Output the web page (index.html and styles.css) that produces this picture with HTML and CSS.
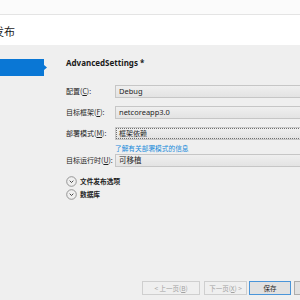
FILE: index.html
```html
<!DOCTYPE html>
<html lang="zh">
<head>
<meta charset="utf-8">
<link rel="stylesheet" href="styles.css">
</head>
<body>
<div class="page">
  <div class="topbar"></div>
  <div class="header"><span class="title">发布</span></div>
  <div class="main">
    <div class="sidebar">
      <div class="nav-item"></div>
    </div>
    <div class="content">
      <div class="heading">AdvancedSettings *</div>
      <div class="form">
        <div class="row">
          <span class="label">配置(<u>C</u>):</span>
          <div class="select">Debug</div>
        </div>
        <div class="row">
          <span class="label">目标框架(<u>F</u>):</span>
          <div class="select">netcoreapp3.0</div>
        </div>
        <div class="row">
          <span class="label">部署模式(<u>M</u>):</span>
          <div class="select focused">框架依赖</div>
        </div>
        <div class="link-row"><span class="link">了解有关部署模式的信息</span></div>
        <div class="row row-4">
          <span class="label">目标运行时(<u>U</u>):</span>
          <div class="select">可移植</div>
        </div>
      </div>
      <div class="expanders">
        <div class="expander">
          <svg class="chev" width="11" height="11" viewBox="0 0 11 11"><circle cx="5.5" cy="5.5" r="4.8" fill="none" stroke="#8a8a8a" stroke-width="0.9"/><path d="M3.7 4.7 L5.5 6.5 L7.3 4.7" fill="none" stroke="#333" stroke-width="0.9"/></svg>
          <span>文件发布选项</span>
        </div>
        <div class="expander">
          <svg class="chev" width="11" height="11" viewBox="0 0 11 11"><circle cx="5.5" cy="5.5" r="4.8" fill="none" stroke="#8a8a8a" stroke-width="0.9"/><path d="M3.7 4.7 L5.5 6.5 L7.3 4.7" fill="none" stroke="#333" stroke-width="0.9"/></svg>
          <span>数据库</span>
        </div>
      </div>
    </div>
  </div>
  <div class="footer">
    <button class="btn btn-prev" disabled>&lt; 上一页(<u>B</u>)</button>
    <button class="btn btn-next" disabled>下一页(<u>X</u>) &gt;</button>
    <button class="btn btn-save">保存</button>
    <button class="btn btn-cancel" aria-label="取消"></button>
  </div>
</div>
</body>
</html>
```
FILE: styles.css
```css
html, body {
  margin: 0;
  padding: 0;
}
body {
  width: 300px;
  height: 300px;
  overflow: hidden;
  background: #efefef;
  font-family: "Noto Sans", "Noto Sans CJK SC", sans-serif;
  color: #1e1e1e;
}
.page {
  display: flex;
  flex-direction: column;
  height: 300px;
}
.topbar {
  height: 14px;
  background: #fbfbfb;
  border-bottom: 1px solid #e4e4e4;
  flex: none;
}
.header {
  height: 30px;
  background: #ffffff;
  display: flex;
  align-items: center;
  flex: none;
  overflow: hidden;
}
.title {
  font-family: "Noto Sans CJK SC", sans-serif;
  font-size: 11px;
  margin-left: -7px;
  color: #1b1b1b;
  padding-top: 2px;
}
.main {
  flex: 1;
  display: flex;
}
.sidebar {
  width: 66px;
  flex: none;
  padding-top: 14px;
}
.nav-item {
  width: 47px;
  height: 17px;
  background: #0a77d5;
  clip-path: polygon(0 0, 44px 0, 44px 6px, 47px 8.5px, 44px 11px, 44px 100%, 0 100%);
}
.content {
  flex: 1;
  padding-top: 12px;
  min-width: 0;
}
.heading {
  font-size: 8px;
  font-weight: bold;
  line-height: 12px;
  height: 12px;
  color: #1a1a1a;
}
.form {
  margin-top: 16px;
  display: flex;
  flex-direction: column;
  gap: 8px;
}
.row {
  display: flex;
  align-items: center;
  height: 13px;
}
.label {
  width: 49px;
  flex: none;
  font-family: "Noto Sans CJK SC", sans-serif;
  font-size: 7px;
  line-height: 13px;
  white-space: nowrap;
  color: #222;
}
.label u {
  text-decoration-thickness: 0.5px;
}
.select {
  width: 200px;
  height: 11px;
  flex: none;
  border: 1px solid #c6c6c6;
  background: linear-gradient(#efefef, #e3e3e3);
  font-family: "Noto Sans", "Noto Sans CJK SC", sans-serif;
  font-size: 7.5px;
  line-height: 11px;
  padding-left: 3px;
  color: #1e1e1e;
}
.select.focused {
  outline: 1px dotted #6f6f6f;
  outline-offset: -2px;
  font-family: "Noto Sans CJK SC", sans-serif;
  font-size: 7px;
}
.link-row {
  margin-top: -8px;
  height: 11px;
  line-height: 11px;
  padding-left: 49px;
}
.link {
  font-family: "Noto Sans CJK SC", sans-serif;
  font-size: 6.7px;
  color: #1a8bdb;
  white-space: nowrap;
}
.row-4 {
  margin-top: -5px;
}
.expanders {
  margin-top: 9px;
  display: flex;
  flex-direction: column;
  gap: 3px;
}
.expander {
  display: flex;
  align-items: center;
  height: 10px;
  gap: 3px;
  font-family: "Noto Sans CJK SC", sans-serif;
  font-size: 6.7px;
  font-weight: bold;
  color: #222;
}
.chev {
  flex: none;
}
.footer {
  height: 19px;
  flex: none;
  display: flex;
  align-items: flex-start;
  padding-left: 142px;
  overflow: hidden;
}
.btn {
  flex: none;
  height: 14px;
  margin: 0;
  padding: 0;
  border: 1px solid #cfcfcf;
  background: #efefef;
  font-family: "Noto Sans CJK SC", sans-serif;
  font-size: 6.5px;
  line-height: 12px;
  color: #a2a2a2;
}
.btn-prev {
  width: 58px;
}
.btn-next {
  width: 43px;
  margin-left: 4px;
}
.btn-save {
  width: 42px;
  margin-left: 2px;
  background: #e1e1e1;
  border-color: #4a95d9;
  color: #1e1e1e;
}
.btn-cancel {
  width: 42px;
  margin-left: 3px;
  background: #e1e1e1;
  border-color: #adadad;
  color: #1e1e1e;
}
```
